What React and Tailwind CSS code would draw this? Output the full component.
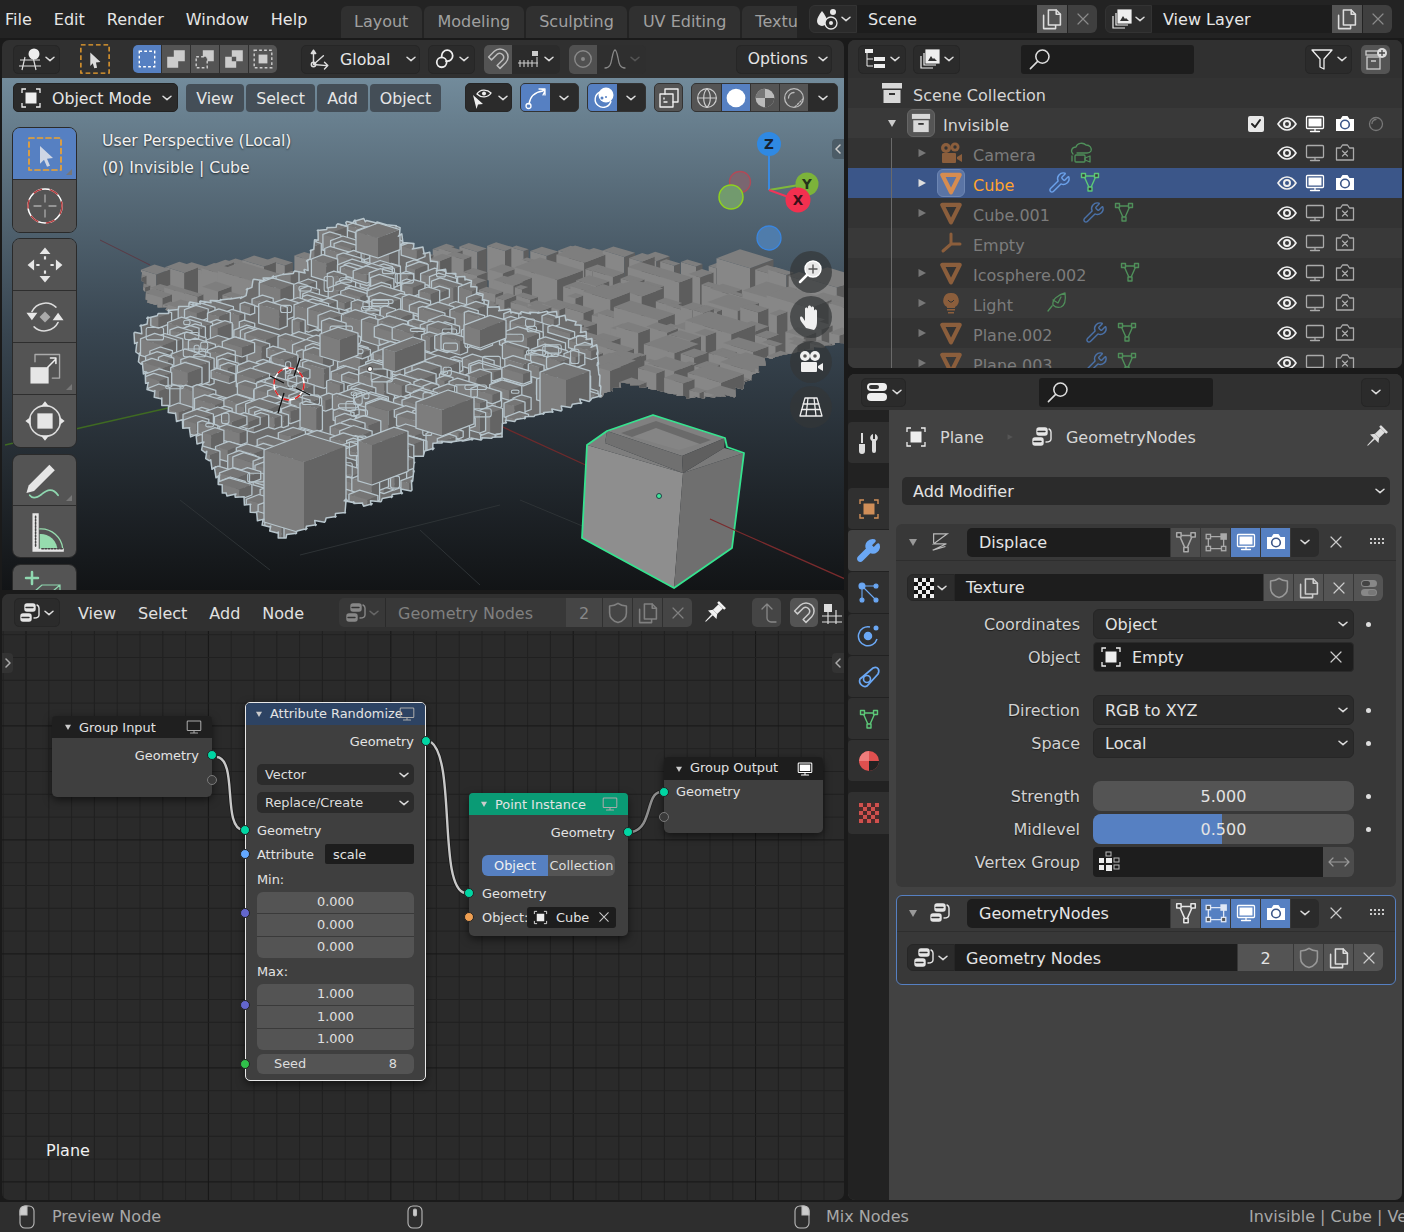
import React from 'react';
import { Wrench } from 'lucide-react';

const T = ({ children, cls = '' }) => <span className={`inline-block translate-y-px ${cls}`}>{children}</span>;
const Svg = ({ s = 20, h, vb = '0 0 20 20', sw = 1.3, className = '', children }) => (
  <svg width={s} height={h || s} viewBox={vb} fill="none" stroke="currentColor" strokeWidth={sw} strokeLinecap="round" strokeLinejoin="round" className={`shrink-0 ${className}`}>{children}</svg>
);
const Chev = ({ className = 'text-[#ddd]' }) => <Svg s={12} vb="0 0 12 12" sw={1.5} className={className}><path d="M2 4.2 6 7.6l4-3.4" /></Svg>;
const Close = ({ className = 'text-[#ccc]', s = 14 }) => <Svg s={s} vb="0 0 14 14" sw={1.2} className={className}><path d="M2 2l10 10M12 2 2 12" /></Svg>;
const Copy = ({ className = 'text-[#ddd]' }) => <Svg s={24} className={className}><path d="M3 7v11h10v-3M7 2.500h6.500l3.500 3.500v9H7z" /><path d="M13.500 2.500v3.500H17" /></Svg>;
const Shield = ({ className = 'text-[#999]' }) => <Svg s={24} className={className}><path d="M10 2c2 1.500 4 2.200 7 2.200V10c0 4-3 6.800-7 8-4-1.200-7-4-7-8V4.200C6 4.200 8 3.500 10 2z" /></Svg>;
const Search = () => <Svg s={24} className="text-[#ddd]"><circle cx="12" cy="8" r="5.500" /><path d="M8 12l-6 6" /></Svg>;
const Eye = ({ className = 'text-[#eee]' }) => <Svg s={20} className={className} sw={1.7}><path d="M1 10c3-4.600 6-6 9-6s6 1.400 9 6c-3 4.600-6 6-9 6s-6-1.400-9-6z" /><circle cx="10" cy="10" r="3" strokeWidth="2" /></Svg>;
const Monitor = ({ on, className = 'text-[#aaa]' }) => <Svg s={20} className={on ? 'text-white' : className}><rect x="1.500" y="2.500" width="17" height="12" rx="1" /><path d="M10 15v2.500M5.500 17.500h9" />{on && <rect x="3.500" y="4.500" width="13" height="8" fill="currentColor" stroke="none" />}</Svg>;
const CamOn = ({ className = 'text-white' }) => <svg width="20" height="20" viewBox="0 0 20 20" className={`shrink-0 ${className}`}><path d="M1 5h4.500l2-3h5l2 3H19v12H1z" fill="currentColor" /><circle cx="10" cy="10.500" r="4.300" fill="none" stroke="#3c5688" strokeWidth="1.600" /></svg>;
const CamOff = () => <Svg s={20} className="text-[#aaa]"><path d="M1.500 5h4l2-3h5l2 3h4v12h-17z" /><path d="M7.500 8l5 5M12.500 8l-5 5" /></Svg>;
const Box = ({ className = 'text-[#d8d8d8]', s = 22 }) => <svg width={s} height={s} viewBox="0 0 22 22" className={`shrink-0 ${className}`}><rect x="1" y="1" width="20" height="5.500" fill="currentColor" /><rect x="2.500" y="8" width="17" height="13" fill="currentColor" /><rect x="8" y="11" width="6" height="2" fill="#333" /></svg>;
const MeshObj = ({ className = 'text-[#8b5e3c]' }) => <Svg s={24} vb="0 0 22 22" sw={3.800} className={className}><path d="M3 3.500h16L11 19.500z" /></Svg>;
const MeshData = ({ className = 'text-[#4f8f5a]', s = 22 }) => <Svg s={s} vb="0 0 22 22" sw={1.400} className={className}><path d="M5 5h12L11.500 17.500 10.500 17.500z" /><rect x="2.500" y="2.500" width="4" height="4" fill="#383838" /><rect x="15.500" y="2.500" width="4" height="4" fill="#383838" /><rect x="9" y="16" width="4" height="4" fill="#383838" /></Svg>;
const GeoIcon = ({ className = 'text-[#e6e6e6]', s = 22 }) => <Svg s={s} vb="0 0 22 22" sw={1.400} className={className}><rect x="6" y="2" width="10" height="7" rx="2" fill="currentColor" /><rect x="2" y="12" width="10" height="7" rx="2" fill="currentColor" /><path d="M7 5.500h7M3 15.500h7" stroke="#333" /><path d="M18 3c2 1 2 2 2 3v7c0 2-2 3-5 3" /></Svg>;
const ObjIcon = ({ className = 'text-[#eee]', s = 22 }) => <svg width={s} height={s} viewBox="0 0 22 22" fill="none" className={`shrink-0 ${className}`}><path d="M2 6V2h4M16 2h4v4M20 16v4h-4M6 20H2v-4" stroke="currentColor" strokeWidth="1.300" /><rect x="5.500" y="5.500" width="11" height="11" fill="currentColor" /></svg>;
const Tri = ({ down, className = 'text-[#888]' }) => <svg width="10" height="10" viewBox="0 0 10 10" className={`shrink-0 ${className}`}>{down ? <path d="M1 2h8L5 9z" fill="currentColor" /> : <path d="M1.500 1l7.500 4-7.500 4z" fill="currentColor" />}</svg>;
const Checker = ({ red }) => {
  const cells = [];
  for (let y = 0; y < 5; y++) for (let x = 0; x < 5; x++) cells.push(<rect key={x + '-' + y} x={x * 4} y={y * 4} width="4" height="4" fill={(x + y) % 2 ? (red ? '#4a2a2a' : '#111') : (red ? '#d0504d' : '#eee')} />);
  return <svg width="20" height="20" viewBox="0 0 20 20" className="shrink-0">{cells}</svg>;
};
const Pin = ({ c = '#e8e8e8', s = 24 }) => (
  <svg width={s} height={s} viewBox="0 0 24 24" className="shrink-0">
    <g transform="rotate(45 12 12)" fill={c}>
      <rect x="7" y="0" width="10" height="2.500" rx=".6" />
      <rect x="9" y="2.500" width="6" height="8" />
      <path d="M9 10.500h6l3 4H6z" />
      <path d="M11.200 14h1.600l-.3 10h-1z" />
    </g>
  </svg>
);
const Magnet = ({ className = 'text-[#bbb]', s = 24 }) => <Svg s={s} vb="0 0 24 24" sw={1.500} className={className}><path d="M2.600 10 8.300 4.300A8 8 0 0 1 19.700 15.700L14 21.400 11.100 18.500 16.800 12.800A4 4 0 0 0 11.200 7.200L5.500 12.900z" /></Svg>;
const SnapGrid = ({ className = 'text-[#ccc]' }) => <svg width="24" height="22" viewBox="0 0 24 22" fill="none" stroke="currentColor" className={`shrink-0 ${className}`} strokeWidth="1.100"><path d="M1 15h20M3 12v7M7 12v7M11 12v7M15 12v7M20 9v10" /><rect x="15" y="3" width="6" height="5" fill="currentColor" stroke="none" /></svg>;
const Dashed = ({ x = 3, y = 3, w = 14, h = 14, c = '#ddd', da = '2.500 2', sw = 1.300 }) => <rect x={x} y={y} width={w} height={h} fill="none" stroke={c} strokeWidth={sw} strokeDasharray={da} />;
const Arrow = ({ x = 0, y = 0, c = '#ddd', k = 1 }) => <path transform={`translate(${x} ${y}) scale(${k})`} d="M0 0l9 8.500-4 .5 1 4.500-2.500.5-1.300-4.500L0 12z" fill={c} />;

const ModeBtn = ({ children, first, last, active }) => (
  <div className={`w-[28px] h-full flex items-center justify-center ${active ? 'bg-[#5680c2]' : 'bg-[#545454]'} ${first ? 'rounded-l-[5px]' : ''} ${last ? 'rounded-r-[5px]' : ''}`}>
    <svg width="22" height="22" viewBox="0 0 20 20">{children}</svg>
  </div>
);

const DarkBtn = ({ w, className = '', children }) => <div className={`h-[29px] ${w} rounded-[5px] bg-[#2b2b2b] border border-[#262626] flex items-center justify-center gap-[2px] shrink-0 ${className}`}>{children}</div>;
const MenuBtn = ({ w, ml, children }) => <div className={`h-[28px] ${w} ${ml} rounded-[4px] bg-[#444e57] flex items-center justify-center shrink-0 text-[#e6e6e6]`}><T>{children}</T></div>;

/* --------- 3D scene --------- */
const rng = (seed) => { let s = seed; return () => (s = (s * 16807) % 2147483647) / 2147483647; };
const inPoly = (x, y, p) => { let c = false; for (let i = 0, j = p.length - 1; i < p.length; j = i++) { if ((p[i][1] > y) !== (p[j][1] > y) && x < ((p[j][0] - p[i][0]) * (y - p[i][1])) / (p[j][1] - p[i][1]) + p[i][0]) c = !c; } return c; };
const TOP = [[134, 267], [207, 258], [258, 253], [405, 247], [442, 242], [534, 243], [580, 243], [695, 258], [755, 260], [845, 275]];
const CITY0 = [[134, 235], [845, 235], [845, 343], [773, 358], [736, 396], [695, 398], [630, 383], [603, 396], [400, 400], [148, 300]];
const HULL0 = [[355, 220], [396, 227], [403, 243], [424, 253], [437, 270], [465, 280], [488, 307], [511, 313], [548, 312], [575, 325], [598, 353], [600, 397], [562, 410], [506, 423], [502, 437], [442, 443], [414, 463], [412, 490], [371, 505], [345, 500], [345, 513], [286, 538], [263, 520], [244, 497], [226, 493], [203, 443], [148, 383], [134, 333], [148, 317], [189, 303], [242, 297], [253, 280], [304, 270], [318, 230]];
const stairs = (p, seed) => {
  const r = rng(seed), out = [];
  p.forEach((a, i) => {
    const b = p[(i + 1) % p.length];
    const n = Math.max(1, Math.round(Math.hypot(b[0] - a[0], b[1] - a[1]) / 10));
    for (let k = 0; k < n; k++) {
      const t0 = k / n, t1 = (k + 1) / n;
      const x0 = a[0] + (b[0] - a[0]) * t0, y0 = a[1] + (b[1] - a[1]) * t0, x1 = a[0] + (b[0] - a[0]) * t1, y1 = a[1] + (b[1] - a[1]) * t1;
      const j = (r() - 0.5) * 3;
      out.push([x0 + j, y0 - j], [x1 + j, y0 + j]);
      out.push([x1, y1]);
    }
  });
  return out;
};
const HULL = stairs(HULL0, 311);
const CITY = stairs(CITY0, 88);
const pts = (p) => p.map((q) => q[0].toFixed(1) + ',' + q[1].toFixed(1)).join(' ');
const bl = (fx, fy, a, b, h) => {
  const F = [fx, fy], L = [fx - a, fy - a * 0.3], R = [fx + b, fy - b * 0.38], B = [fx - a + b, fy - a * 0.3 - b * 0.38];
  const d = (q) => [q[0], q[1] + h];
  return { top: [L, B, R, F], left: [L, F, d(F), d(L)], right: [F, R, d(R), d(F)], sil: [L, B, R, d(R), d(F), d(L)], fy };
};
const topAt = (x) => { for (let i = 0; i < TOP.length - 1; i++) if (x <= TOP[i + 1][0]) { const t = (x - TOP[i][0]) / (TOP[i + 1][0] - TOP[i][0]); return TOP[i][1] + t * (TOP[i + 1][1] - TOP[i][1]); } return TOP[TOP.length - 1][1]; };
const genCity = () => {
  const r = rng(4242), out = [];
  for (let row = 0; row < 9; row++) {
    let x = 130 + r() * 18;
    while (x < 880) {
      const big = r() < 0.14;
      const a = big ? 26 + r() * 26 : 7 + r() * 15, b = big ? 10 + r() * 16 : 5 + r() * 9, h = big ? 60 + r() * 40 : 34 + r() * 46;
      const fx = x + a * 0.5;
      const jig = row === 0 ? r() * 6 : (r() - 0.3) * 24;
      out.push(bl(fx, topAt(Math.min(fx, 845)) + 8 + row * 15 + jig, a, b, h));
      x += a * 0.5 + 4 + r() * 15;
    }
  }
  return out.sort((p, q) => p.fy - q.fy);
};
const genBlocks = (poly, n, seed, box, sa, sb, sh) => {
  const r = rng(seed), out = [];
  while (out.length < n) {
    const x = box[0] + r() * (box[2] - box[0]), y = box[1] + r() * (box[3] - box[1]);
    if (inPoly(x, y, poly)) out.push(bl(x, y, sa[0] + r() * sa[1], sb[0] + r() * sb[1], sh[0] + r() * sh[1]));
  }
  return out.sort((p, q) => p.fy - q.fy);
};
const cityBlocks = genCity();
const fortBlocks = genBlocks(HULL0, 400, 977, [134, 220, 600, 538], [7, 16], [4, 11], [5, 20]);
const bigBlocks = [bl(304, 462, 40, 42, 72), bl(372, 445, 14, 36, 40), bl(378, 238, 22, 22, 20), bl(566, 380, 26, 24, 55), bl(442, 410, 26, 32, 26), bl(340, 340, 20, 18, 22), bl(395, 352, 12, 30, 20), bl(480, 330, 16, 26, 18)];
const detail = (() => { const r = rng(555), o = []; while (o.length < 80) { const x = 134 + r() * 466, y = 220 + r() * 318; if (inPoly(x, y, HULL0)) o.push({ x, y, w: 5 + r() * 18, h: 3 + r() * 12 }); } return o; })();

const Blocks = ({ list, outline }) => list.map((b, i) => (
  <g key={i}>
    <polygon points={pts(b.left)} fill={outline ? '#7d7d7d' : '#878787'} />
    <polygon points={pts(b.right)} fill={outline ? '#646464' : '#5d5d5d'} />
    <polygon points={pts(b.top)} fill={outline ? '#757575' : '#7e7e7e'} />
    {outline && <polygon points={pts(b.sil)} fill="none" stroke="#b7c5cc" strokeWidth="1.300" strokeLinejoin="round" />}
  </g>
));

const Scene = () => (
  <svg width="842" height="512" viewBox="2 78 842 512" className="absolute left-0 top-0">
    <defs>
      <clipPath id="cityClip"><polygon points={pts(CITY)} /></clipPath>
      <clipPath id="hullClip"><polygon points={pts(HULL)} /></clipPath>
    </defs>
    <path d="M100 240l50 25" stroke="#5b3a44" strokeWidth="1" />
    <path d="M5 445 190 403" stroke="#3f6a22" strokeWidth="1.300" />
    <path d="M470 412 590 467" stroke="#6e2a2c" strokeWidth="1.300" />
    <path d="M300 555l200-50M520 500l120 50M420 530l60 55M180 500l90 70" stroke="#2e3336" strokeWidth="1" />
    <g clipPath="url(#cityClip)"><Blocks list={cityBlocks} /></g>
    <polygon points={pts(HULL)} fill="#6c6c6c" />
    <g clipPath="url(#hullClip)">
      <Blocks list={fortBlocks} outline />
      {detail.map((d, i) => <rect key={i} x={d.x} y={d.y} width={d.w} height={d.h} rx="2" fill="none" stroke="#b7c5cc" strokeWidth="1.100" />)}
      <Blocks list={bigBlocks} outline />
    </g>
    <polygon points={pts(HULL)} fill="none" stroke="#b7c5cc" strokeWidth="1.500" strokeLinejoin="round" />
    {/* selected cube */}
    <polygon points="587,445 683,473 674,588 582,538" fill="#8e8e8e" />
    <polygon points="683,473 744,453 732,548 674,588" fill="#6f6f6f" />
    <polygon points="587,445 607,431 605,443 683,473" fill="#7e7e7e" />
    <polygon points="683,473 724,448 744,453" fill="#7a7a7a" />
    <polygon points="607,431 653,415 725,438 682,456" fill="#808080" />
    <polygon points="607,431 682,456 683,473 605,443" fill="#707070" />
    <polygon points="682,456 725,438 724,448 683,473" fill="#5f5f5f" />
    <polygon points="621,433 656,421 711,440 679,450" fill="#858585" />
    <polygon points="621,433 656,421 711,440 700,444 656,428 632,437" fill="#6a6a6a" />
    <polygon points="587,445 607,431 653,415 725,438 727,447 744,453 732,548 674,588 582,538" fill="none" stroke="#36e38f" strokeWidth="1.800" strokeLinejoin="round" />
    <path d="M710 519l22 10M732 529l113 50" stroke="#7a2b2d" strokeWidth="1.300" />
    <circle cx="659" cy="496" r="2.500" fill="#3ee89a" stroke="#123" strokeWidth=".8" />
    <circle cx="370" cy="369" r="2.500" fill="#fff" stroke="#222" strokeWidth=".8" />
    {/* 3d cursor */}
    <ellipse cx="289" cy="384" rx="15" ry="16" fill="none" stroke="#fff" strokeWidth="1.500" />
    <ellipse cx="289" cy="384" rx="15" ry="16" fill="none" stroke="#e02020" strokeWidth="1.500" strokeDasharray="6 6" />
    <path d="M300 358l-6 18M284 393l-6 20M270 376l14 7M296 388l14 7" stroke="#111" strokeWidth="1.300" />
    {/* gizmo */}
    <circle cx="769" cy="238" r="12" fill="#4f7cab" stroke="#3a86df" strokeWidth="1.300" />
    <circle cx="740" cy="182" r="10.500" fill="#7a6670" stroke="#b04a58" strokeWidth="1.300" />
    <circle cx="731" cy="197" r="12" fill="#729a6e" stroke="#8fd21f" strokeWidth="1.500" />
    <path d="M769 190V150" stroke="#3a8ae0" strokeWidth="2" />
    <path d="M769 190l30-5" stroke="#7fb93a" strokeWidth="2" />
    <path d="M769 190l22 8" stroke="#f0355a" strokeWidth="2" />
    <circle cx="769" cy="144" r="12" fill="#2f89e3" />
    <circle cx="807" cy="184" r="11.500" fill="#7cb33a" />
    <circle cx="798" cy="200" r="12.500" fill="#f2304f" />
    <g fontFamily="'DejaVu Sans',sans-serif" fontWeight="700" fontSize="13.500" textAnchor="middle" fill="#162232">
      <text x="769" y="149">Z</text>
      <text x="807" y="189" fill="#25331a">Y</text>
      <text x="798" y="205" fill="#3a0f18">X</text>
    </g>
  </svg>
);

/* --------- toolbar --------- */
const Tool = ({ active, last, first, corner, k = 44, h = 'h-[52px]', children }) => (
  <div className={`relative ${h} w-full flex items-center justify-center ${active ? 'bg-[#5680c2]' : 'bg-[#545454]'} ${first ? 'rounded-t-[7px]' : ''} ${last ? 'rounded-b-[7px]' : 'border-b border-[#2e2e2e]'}`}>
    <svg width={k} height={k} viewBox="0 0 44 44" fill="none" strokeLinecap="round" strokeLinejoin="round">{children}</svg>
    {corner && <span className="absolute right-[4px] bottom-[4px] w-0 h-0 border-l-[6px] border-l-transparent border-b-[6px] border-b-[#777]" />}
  </div>
);
const Toolbar = () => (
  <div className="absolute left-[11px] top-[50px] flex flex-col w-[63px]">
    <div className="rounded-[7px] outline outline-[#2a2a2a]">
      <Tool first active corner>
        <rect x="6" y="6" width="32" height="32" stroke="#f0a22e" strokeWidth="1.700" strokeDasharray="5 3.500" />
        <path d="M17 14l13 12-6 .8 3 7-3 1-3-7-4 4z" fill="#cfd6e4" />
      </Tool>
      <Tool last>
        <circle cx="22" cy="22" r="17" stroke="#fff" strokeWidth="1.500" />
        <circle cx="22" cy="22" r="17" stroke="#b33a3c" strokeWidth="1.500" strokeDasharray="8 9" />
        <path d="M22 11v7M22 26v7M11 22h7M26 22h7" stroke="#aaa" strokeWidth="1.300" />
      </Tool>
    </div>
    <div className="rounded-[7px] outline outline-[#2a2a2a] mt-[7px]">
      <Tool first k={48}>
        <g fill="#e6e6e6"><path d="M22 6l-5 6h10zM22 38l-5-6h10zM6 22l6-5v10zM38 22l-6-5v10z" /><path d="M21 14h2v3h-2zM21 27h2v3h-2zM14 21h3v2h-3zM27 21h3v2h-3z" /></g>
      </Tool>
      <Tool k={48}>
        <path d="M10 17a14 14 0 0 1 22-4M34 27a14 14 0 0 1-22 4" stroke="#ddd" strokeWidth="1.400" />
        <path d="M5 18h10l-5 7zM29 25h10l-5-7z" fill="#e6e6e6" />
        <path d="M22 17l5 5-5 5-5-5z" fill="#aaa" />
      </Tool>
      <Tool corner k={40}>
        <path d="M11 14V6h27v26h-8" stroke="#aaa" strokeWidth="1.500" />
        <rect x="6" y="20" width="20" height="18" fill="#e6e6e6" />
        <path d="M25 20l9-9M28 10h6v6" stroke="#eee" strokeWidth="1.700" />
      </Tool>
      <Tool last k={48}>
        <rect x="15" y="15" width="14" height="14" fill="#e6e6e6" />
        <path d="M12 12a14 14 0 0 1 20 0M32 32a14 14 0 0 1-20 0M12 32a14 14 0 0 1 0-20M32 12a14 14 0 0 1 0 20" stroke="#ddd" strokeWidth="1.300" strokeDasharray="9 4" />
        <path d="M22 4l-4 5h8zM22 40l-4-5h8zM4 22l5-4v8zM40 22l-5-4v8z" fill="#e6e6e6" />
      </Tool>
    </div>
    <div className="rounded-[7px] outline outline-[#2a2a2a] mt-[8px]">
      <Tool first corner k={48} h="h-[51px]">
        <path d="M7 27l19-19 5 5-19 19-7 2z" fill="#e6e6e6" />
        <path d="M8 36c3 4 7 2 11-1 5-4 10-6 15 1" stroke="#8fd8b0" strokeWidth="1.600" />
      </Tool>
      <Tool last k={46} h="h-[51px]">
        <path d="M17 24a16 16 0 0 1 17 16H17z" fill="#96dcae" />
        <path d="M17 19a21 21 0 0 1 22 19" stroke="#96dcae" strokeWidth="1.300" />
        <path d="M10 4h6v34h24v3H10z" fill="#e6e6e6" />
        <path d="M13 7v30M19 38h20" stroke="#444" strokeWidth="1.500" strokeDasharray="1.500 1.500" />
      </Tool>
    </div>
    <div className="rounded-[7px] outline outline-[#2a2a2a] mt-[8px]">
      <Tool first>
        <path d="M9 3v12M3 9h12" stroke="#8fd8b0" strokeWidth="2.500" />
        <path d="M12 22l7-6h18v14H12zM12 22h18v8M30 22l7-6" stroke="#8fd8b0" strokeWidth="1.200" />
      </Tool>
    </div>
  </div>
);

const Nav = ({ children }) => <div className="w-[42px] h-[42px] rounded-full bg-[#333638]/70 flex items-center justify-center">{children}</div>;
const NavGizmos = () => (
  <div className="absolute left-[788px] top-[173px] flex flex-col gap-[3px]">
    <Nav><Svg s={26} vb="0 0 26 26" sw={1.400} className="text-white"><circle cx="15" cy="10" r="8" fill="#e8e8e8" /><path d="M15 6v8M11 10h8" stroke="#555" /><path d="M9 16l-7 7" strokeWidth="2.500" /></Svg></Nav>
    <Nav><svg width="24" height="26" viewBox="0 0 24 26"><path d="M7 24c-2-3-6-7-6-10 0-2 2-2 3 0l2 3V5c0-2 3-2 3 0v6-8c0-2 3-2 3 0v8-7c0-2 3-2 3 0v8-5c0-2 3-2 3 0v10c0 5-1 7-3 9z" fill="#f0f0f0" /></svg></Nav>
    <Nav><svg width="26" height="24" viewBox="0 0 26 24" fill="#f0f0f0"><circle cx="7" cy="6" r="5" /><circle cx="17" cy="6" r="5" /><circle cx="7" cy="6" r="1.800" fill="#555" /><circle cx="17" cy="6" r="1.800" fill="#555" /><rect x="3" y="12" width="16" height="10" rx="1" /><path d="M20 16l5-3v8l-5-3z" /></svg></Nav>
    <Nav><Svg s={26} vb="0 0 26 26" sw={1.300} className="text-[#eee]"><path d="M7 4h12l5 18H2zM10 4 8 22M16 4l2 18M5 10h16M3.500 15.500h19" /></Svg></Nav>
  </div>
);

/* --------- viewport --------- */
const TopHeader = () => (
  <div className="h-[38px] bg-[#303030] flex items-center shrink-0 text-[#e6e6e6]">
    <DarkBtn w="w-[47px]" className="ml-[11px]">
      <svg width="24" height="24" viewBox="0 0 24 24" fill="none" stroke="#ddd" strokeWidth="1.200"><path d="M2 13h20M1 19h22M7 10l-3 13M15 10l3 13" /><circle cx="16" cy="7" r="5.500" fill="#eee" stroke="none" /></svg>
      <Chev />
    </DarkBtn>
    <div className="ml-[19px] w-[32px] h-[32px] flex items-center justify-center">
      <svg width="34" height="34" viewBox="0 0 34 34"><Dashed x={2} y={2} w={30} h={30} c="#f0a22e" da="5 3" sw={1.500} /><Arrow x={12} y={10} c="#ddd" k={1.200} /></svg>
    </div>
    <div className="ml-[22px] w-[144px] h-[28px] flex gap-[1px]">
      <ModeBtn first active><Dashed c="#fff" /></ModeBtn>
      <ModeBtn><path d="M2 18V8h6V2h10v10h-6v6z" fill="#ccc" /></ModeBtn>
      <ModeBtn><Dashed x={2} y={8} w={10} h={10} c="#ccc" /><path d="M8 2h10v10h-6V8H8z" fill="#ccc" /></ModeBtn>
      <ModeBtn><path d="M2 18V8h6V2h10v10h-6v6zM8 8v4h4V8z" fill="#ccc" fillRule="evenodd" /></ModeBtn>
      <ModeBtn last><Dashed x={2} y={2} w={16} h={16} c="#ccc" /><rect x="6" y="6" width="8" height="8" fill="#ccc" /></ModeBtn>
    </div>
    <DarkBtn w="w-[119px]" className="ml-[24px] justify-start pl-[6px]">
      <Svg s={22} className="text-[#ddd]"><path d="M5 2l-2 3h4zM5 3v12l12 1M15 13l3 3-3 3M5 15l9-8" /><circle cx="5" cy="15" r="2" /></Svg>
      <T cls="ml-[8px] text-[15.800px]">Global</T><span className="ml-auto mr-[2px]"><Chev /></span>
    </DarkBtn>
    <DarkBtn w="w-[47px]" className="ml-[8px]">
      <Svg s={22} className="text-[#eee]" sw={1.600}><circle cx="7" cy="13" r="4.500" /><path d="M7 8.500V7a5 5 0 0 1 10 0v0a5 5 0 0 1-5 5h-1" /></Svg><Chev />
    </DarkBtn>
    <div className="ml-[9px] w-[76px] h-[29px] rounded-[5px] bg-[#2b2b2b] flex items-center overflow-hidden">
      <div className="w-[28px] h-full bg-[#545454] flex items-center justify-center"><Magnet /></div>
      <div className="flex-1 flex items-center justify-center gap-[2px]"><SnapGrid /><Chev /></div>
    </div>
    <div className="ml-[9px] w-[77px] h-[29px] rounded-[5px] bg-[#2f2f2f] flex items-center overflow-hidden">
      <div className="w-[28px] h-full bg-[#505050] flex items-center justify-center"><Svg s={22} className="text-[#888]"><circle cx="10" cy="10" r="7.500" /><circle cx="10" cy="10" r="1.800" fill="currentColor" stroke="none" /></Svg></div>
      <div className="flex-1 flex items-center justify-center text-[#888] gap-[2px]"><Svg s={24} vb="0 0 24 24"><path d="M2 21c5 0 6-4 7-10 1-5 2-8 3-8s2 3 3 8c1 6 2 10 7 10" /></Svg><Chev className="text-[#555]" /></div>
    </div>
    <DarkBtn w="w-[96px]" className="ml-[90px] justify-end pr-[2px]"><T cls="text-[15.600px] mr-[7px]">Options</T><Chev /></DarkBtn>
  </div>
);

const ViewportHeader = () => (
  <div className="absolute left-[11px] top-[5px] flex items-center h-[29px] text-[#e6e6e6] text-[15.800px]">
    <div className="w-[165px] h-[29px] rounded-[5px] bg-[#2b2b2b] border border-[#222] flex items-center pl-[6px] shrink-0">
      <ObjIcon /><T cls="ml-[10px]">Object Mode</T><span className="ml-auto mr-[4px]"><Chev /></span>
    </div>
    <MenuBtn w="w-[58px]" ml="ml-[8px]">View</MenuBtn>
    <MenuBtn w="w-[69px]" ml="ml-[2px]">Select</MenuBtn>
    <MenuBtn w="w-[51px]" ml="ml-[2px]">Add</MenuBtn>
    <MenuBtn w="w-[71px]" ml="ml-[2px]">Object</MenuBtn>
    <DarkBtn w="w-[47px]" className="ml-[24px]">
      <svg width="26" height="22" viewBox="0 0 26 22" fill="none"><path d="M8 7c3-5 10-5 14-1-3 5-10 5-14 1z" stroke="#eee" strokeWidth="1.400" /><circle cx="15" cy="6.500" r="2" fill="#eee" /><path d="M4 8l10 9-5 .5-1.500 4.500z" fill="#eee" /></svg>
      <Chev />
    </DarkBtn>
    <div className="ml-[8px] w-[59px] h-[29px] rounded-[5px] bg-[#2b2b2b] border border-[#333] flex overflow-hidden">
      <div className="w-[29px] bg-[#5680c2] flex items-center justify-center"><Svg s={24} vb="0 0 24 24" className="text-white"><path d="M5 18C6 11 11 6 19 5M15 3h6v6M17 3l4 2-2 4" /><circle cx="4.500" cy="20" r="2.500" /></Svg></div>
      <div className="flex-1 flex items-center justify-center"><Chev /></div>
    </div>
    <div className="ml-[8px] w-[59px] h-[29px] rounded-[5px] bg-[#2b2b2b] border border-[#333] flex overflow-hidden">
      <div className="w-[29px] bg-[#5680c2] flex items-center justify-center"><svg width="24" height="24" viewBox="0 0 24 24" fill="none"><path d="M9 6a8 8 0 1 0 11 9" stroke="#fff" strokeWidth="1.400" /><circle cx="15" cy="9" r="7.500" fill="#fff" /><circle cx="11" cy="12" r="1.500" fill="#5680c2" /><circle cx="15" cy="11" r="1" fill="#5680c2" /></svg></div>
      <div className="flex-1 flex items-center justify-center"><Chev /></div>
    </div>
    <div className="ml-[8px] w-[29px] h-[29px] rounded-[5px] bg-[#545454] border border-[#333] flex items-center justify-center shrink-0"><Svg s={24} vb="0 0 24 24" className="text-[#eee]" sw={1.400}><rect x="3" y="8" width="13" height="13" /><path d="M8 8V3h13v13h-5" /><path d="M7 12v1M7 16h3" /></Svg></div>
    <div className="ml-[8px] w-[147px] h-[29px] rounded-[5px] bg-[#2b2b2b] border border-[#333] flex overflow-hidden shrink-0">
      <div className="w-[29px] bg-[#545454] flex items-center justify-center"><Svg s={22} className="text-[#ccc]" sw={1.100}><circle cx="10" cy="10" r="8.500" /><path d="M1.500 10h17M10 1.500c-4 4-4 13 0 17M10 1.500c4 4 4 13 0 17" /></Svg></div>
      <div className="w-[29px] bg-[#5680c2] flex items-center justify-center border-l border-[#333]"><svg width="22" height="22" viewBox="0 0 20 20"><circle cx="10" cy="10" r="8.500" fill="#fff" /></svg></div>
      <div className="w-[29px] bg-[#545454] flex items-center justify-center border-l border-[#333]"><svg width="22" height="22" viewBox="0 0 20 20"><circle cx="10" cy="10" r="8.500" fill="#bbb" /><path d="M10 10h8.500A8.500 8.500 0 0 1 10 18.500z" fill="#555" /><path d="M10 1.500A8.500 8.500 0 0 0 1.500 10H10z" fill="#777" /></svg></div>
      <div className="w-[29px] bg-[#545454] flex items-center justify-center border-l border-[#333]"><Svg s={22} className="text-[#bbb]" sw={1.200}><circle cx="10" cy="10" r="8.500" /><path d="M5 10a5 5 0 0 1 5-5" /><path d="M11 18l7-7" strokeDasharray="1.500 1.500" /></Svg></div>
      <div className="flex-1 flex items-center justify-center"><Chev /></div>
    </div>
  </div>
);

const Viewport = () => (
  <div className="h-[550px] rounded-t-[7px] overflow-hidden flex flex-col shrink-0">
    <TopHeader />
    <div className="relative flex-1 overflow-hidden bg-linear-to-b from-[#728b9b] via-[#384550] via-50% to-[#121416]">
      <Scene />
      <ViewportHeader />
      <Toolbar />
      <NavGizmos />
      <div className="absolute left-[100px] top-[53px] flex flex-col gap-[7px] text-[#f0f0f0] text-[15.700px] leading-[20px] [text-shadow:0_1px_2px_rgba(0,0,0,.7)]">
        <span>User Perspective (Local)</span>
        <span>(0) Invisible | Cube</span>
      </div>
      <div className="absolute right-0 top-[61px] w-[12px] h-[20px] rounded-l-[4px] bg-[#4c5c67] flex items-center justify-center text-[#ccc]"><Svg s={10} vb="0 0 10 10" sw={1.500}><path d="M7 1 3 5l4 4" /></Svg></div>
    </div>
  </div>
);

/* --------- node editor --------- */
const Socket = ({ c, side = 'l' }) => (
  <span className={`absolute top-1/2 -translate-y-1/2 w-[10px] h-[10px] rounded-full ${side === 'l' ? 'left-[-6px]' : 'right-[-6px]'} border border-[#222] ${c || ''}`} />
);
const NRow = ({ children, right, h = 'h-[24px]', mt = '' }) => <div className={`relative ${h} ${mt} flex items-center px-[11px] ${right ? 'justify-end' : ''}`}>{children}</div>;
const NodeShell = ({ pos, w, sel, children }) => (
  <div className={`absolute ${pos} ${w} rounded-[5px] bg-[#3f3f3f] text-[#e3e3e3] text-[12.900px] leading-none shadow-[0_3px_8px_rgba(0,0,0,.55)] ${sel ? 'border border-[#e8e8e8]' : ''}`}>{children}</div>
);
const NHead = ({ bg, title, mon, pl = 'pl-[11px]', h = 'h-[22px]', shift }) => (
  <div className={`${h} ${bg} rounded-t-[4px] flex items-center ${pl} relative overflow-hidden`}>
    <Tri down className="text-[#ccc] scale-75" />
    <span className={`ml-[6px] whitespace-nowrap ${shift ? 'translate-y-px' : ''}`}>{title}</span>
    <span className="absolute right-[8px] top-1/2 -translate-y-1/2 scale-[.8] bg-transparent"><Monitor on={mon} className="text-[#aaa]" /></span>
  </div>
);
const NSel = ({ children, mt }) => <div className={`mx-[11px] ${mt} h-[21px] rounded-[5px] bg-[#2b2b2b] flex items-center pl-[8px] pr-[4px] justify-between text-[#ddd]`}><T>{children}</T><Chev /></div>;
const NVec = ({ vals }) => (
  <div className="mx-[11px] mt-[1px] h-[66px] rounded-[6px] bg-[#545454] flex flex-col overflow-hidden text-[#e0e0e0]">
    {vals.map((v, i) => <div key={i} className={`flex-1 flex items-center justify-center ${i < 2 ? 'border-b border-[#3a3a3a]' : ''}`}>{v}</div>)}
  </div>
);

const Grid = () => {
  const v = [], h = [];
  for (let i = 0; i < 38; i++) { const x = 3.2 + i * 22.8; v.push(<path key={i} d={`M${x} 631V1200`} stroke={i % 8 === 1 ? '#171717' : '#202020'} strokeWidth="1" />); }
  for (let i = 0; i < 26; i++) { const y = 634.7 + i * 22.8; h.push(<path key={i} d={`M2 ${y}H844`} stroke={(i - 4) % 5 === 0 ? '#171717' : '#202020'} strokeWidth="1" />); }
  return <>{v}{h}</>;
};

const Wire = ({ d, c = '#c8c8c8' }) => <><path d={d} stroke="#1a1a1a" strokeWidth="4" fill="none" /><path d={d} stroke={c} strokeWidth="2.400" fill="none" /></>;

const NodeEditor = () => (
  <div className="h-[606px] rounded-[7px] overflow-hidden flex flex-col shrink-0 bg-[#2a2a2a]">
    <div className="h-[37px] bg-[#303030] flex items-center shrink-0 text-[#e0e0e0] overflow-hidden">
      <DarkBtn w="w-[46px]" className="ml-[12px]"><GeoIcon /><Chev /></DarkBtn>
      <T cls="ml-[18px]">View</T>
      <T cls="ml-[22px]">Select</T>
      <T cls="ml-[22px]">Add</T>
      <T cls="ml-[22px]">Node</T>
      <div className="ml-[35px] w-[46px] h-[29px] rounded-l-[5px] bg-[#383838] flex items-center justify-center shrink-0 gap-[1px]"><GeoIcon className="text-[#888]" /><Chev className="text-[#666]" /></div>
      <div className="w-[181px] h-[29px] bg-[#383838] border-l border-[#2a2a2a] flex items-center pl-[12px] text-[#808080] shrink-0"><T>Geometry Nodes</T></div>
      <div className="w-[36px] h-[29px] bg-[#454545] flex items-center justify-center text-[#888] shrink-0"><T>2</T></div>
      <div className="ml-[1px] w-[29px] h-[29px] bg-[#454545] flex items-center justify-center shrink-0"><Shield className="text-[#808080]" /></div>
      <div className="ml-[1px] w-[29px] h-[29px] bg-[#454545] flex items-center justify-center shrink-0"><Copy className="text-[#808080]" /></div>
      <div className="ml-[1px] w-[29px] h-[29px] bg-[#454545] rounded-r-[5px] flex items-center justify-center shrink-0"><Close className="text-[#808080]" /></div>
      <div className="ml-[8px] w-[28px] flex justify-center shrink-0"><Pin c="#f2f2f2" /></div>
      <div className="ml-[24px] w-[29px] h-[29px] rounded-[5px] bg-[#454545] flex items-center justify-center shrink-0"><Svg s={24} vb="0 0 24 24" className="text-[#888]"><path d="M7 8l5-5 5 5M12 3v14c0 2 2 4 4 4h5" /></Svg></div>
      <div className="ml-[9px] w-[28px] h-[29px] rounded-[5px] bg-[#545454] flex items-center justify-center shrink-0"><Magnet className="text-[#ccc]" /></div>
      <div className="w-[28px] flex items-center justify-center shrink-0 text-[#ddd]"><svg width="22" height="22" viewBox="0 0 22 22" fill="none" stroke="currentColor" strokeWidth="1.200"><path d="M1 14h20M1 20h20M7 8v14M15 8v14" /><rect x="3" y="2" width="8" height="8" fill="currentColor" stroke="none" /></svg></div>
    </div>
    <div className="relative flex-1 overflow-hidden">
      <svg width="842" height="569" viewBox="2 631 842 569" className="absolute left-0 top-0">
        <Grid />
        <Wire d="M217 757C238 760 222 828 243 830" />
        <Wire d="M431 742C456 760 438 888 465 893" />
        <path d="M632 832C652 828 646 794 660 792" stroke="#1a1a1a" strokeWidth="4" fill="none" />
        <path d="M632 832C652 828 646 794 660 792" stroke="#8d8d8d" strokeWidth="2.600" fill="none" />
      </svg>
      <div className="absolute left-0 top-[22px] w-[11px] h-[20px] rounded-r-[4px] bg-[#333] flex items-center justify-center text-[#aaa]"><Svg s={10} vb="0 0 10 10" sw={1.500}><path d="M3 1l4 4-4 4" /></Svg></div>
      <div className="absolute right-0 top-[22px] w-[12px] h-[20px] rounded-l-[4px] bg-[#333] flex items-center justify-center text-[#aaa]"><Svg s={10} vb="0 0 10 10" sw={1.500}><path d="M7 1 3 5l4 4" /></Svg></div>

      <NodeShell pos="left-[50px] top-[85px]" w="w-[160px] h-[81px]">
        <NHead bg="bg-[#1f1f1f]" title="Group Input" shift />
        <NRow right mt="mt-[5px]" h="h-[24px]">
          <T cls="mr-[2px]">Geometry</T><span className="absolute right-[-5px] top-1/2 -translate-y-1/2 w-[10px] h-[10px] rounded-full bg-[#00d6a3] border border-[#222]" />
        </NRow>
        <div className="relative h-[26px]"><span className="absolute right-[-5px] top-1/2 -translate-y-1/2 w-[10px] h-[10px] rounded-full border border-[#7a7a7a] bg-[#3a3a3a]" /></div>
      </NodeShell>

      <NodeShell pos="left-[243px] top-[71px]" w="w-[181px] h-[379px]" sel>
        <NHead bg="bg-[#2d4363]" title="Attribute Randomize" pl="pl-[8px]" />
        <NRow right mt="mt-[4px]"><T>Geometry</T><Socket side="r" c="bg-[#00d6a3]" /></NRow>
        <NSel mt="mt-[11px]">Vector</NSel>
        <NSel mt="mt-[7px]">Replace/Create</NSel>
        <NRow mt="mt-[5px]"><T>Geometry</T><Socket c="bg-[#00d6a3]" /></NRow>
        <NRow><T>Attribute</T><Socket c="bg-[#63a8ff]" /><span className="absolute left-[79px] right-[11px] h-[20px] bg-[#1d1d1d] rounded-[2px] flex items-center pl-[8px]"><T>scale</T></span></NRow>
        <NRow mt="mt-[1px]"><T>Min:</T></NRow>
        <div className="relative"><NVec vals={['0.000', '0.000', '0.000']} /><span className="absolute left-[-6px] top-[16px] w-[10px] h-[10px] rounded-full bg-[#6366cc] border border-[#222]" /></div>
        <NRow mt="mt-[1px]"><T>Max:</T></NRow>
        <div className="relative"><NVec vals={['1.000', '1.000', '1.000']} /><span className="absolute left-[-6px] top-[16px] w-[10px] h-[10px] rounded-full bg-[#6366cc] border border-[#222]" /></div>
        <div className="relative mt-[4px] h-[20px]">
          <div className="mx-[11px] h-[20px] rounded-[6px] bg-[#545454] flex items-center justify-between px-[17px] text-[#ddd]"><span>Seed</span><span>8</span></div>
          <Socket c="bg-[#30c04a]" />
        </div>
      </NodeShell>

      <NodeShell pos="left-[467px] top-[162px]" w="w-[159px] h-[143px]">
        <NHead bg="bg-[#0a9b75]" title="Point Instance" pl="pl-[10px]" shift />
        <NRow right mt="mt-[5px]" h="h-[24px]"><T cls="mr-[2px]">Geometry</T><span className="absolute right-[-5px] top-1/2 -translate-y-1/2 w-[10px] h-[10px] rounded-full bg-[#00d6a3] border border-[#222]" /></NRow>
        <div className="mx-[13px] mt-[11px] h-[21px] flex rounded-[6px] overflow-hidden">
          <div className="w-[66px] bg-[#5680c2] flex items-center justify-center text-[#f0f0f0]"><T>Object</T></div>
          <div className="flex-1 bg-[#545454] flex items-center justify-center text-[#ddd] whitespace-nowrap"><T>Collection</T></div>
        </div>
        <div className="relative h-[24px] mt-[5px] flex items-center pl-[13px]"><T>Geometry</T><span className="absolute left-[-5px] top-1/2 -translate-y-1/2 w-[10px] h-[10px] rounded-full bg-[#00d6a3] border border-[#222]" /></div>
        <div className="relative h-[24px] flex items-center pl-[13px]">
          <T>Object:</T><span className="absolute left-[-5px] top-1/2 -translate-y-1/2 w-[10px] h-[10px] rounded-full bg-[#ef9f52] border border-[#222]" />
          <div className="absolute left-[58px] w-[89px] h-[21px] rounded-[3px] bg-[#1d1d1d] flex items-center pl-[6px]"><ObjIcon s={15} /><T cls="ml-[8px]">Cube</T><span className="ml-auto mr-[6px]"><Close s={12} /></span></div>
        </div>
      </NodeShell>

      <NodeShell pos="left-[662px] top-[126px]" w="w-[159px] h-[76px]">
        <NHead bg="bg-[#1d1d1d]" title="Group Output" mon h="h-[23px]" pl="pl-[10px]" />
        <div className="relative h-[24px] flex items-center pl-[12px]"><span>Geometry</span><span className="absolute left-[-5px] top-1/2 -translate-y-1/2 w-[10px] h-[10px] rounded-full bg-[#00d6a3] border border-[#222]" /></div>
        <div className="relative h-[26px]"><span className="absolute left-[-5px] top-1/2 -translate-y-1/2 w-[10px] h-[10px] rounded-full border border-[#7a7a7a] bg-[#3a3a3a]" /></div>
      </NodeShell>

      <span className="absolute left-[44px] top-[510px] text-[#f0f0f0] leading-[20px]">Plane</span>
    </div>
  </div>
);

/* --------- outliner --------- */
const CamObj = () => <svg width="24" height="22" viewBox="0 0 24 22" fill="#8b5e3c" className="shrink-0"><circle cx="7" cy="6" r="5" /><circle cx="16" cy="5" r="4.500" /><circle cx="7" cy="6" r="1.700" fill="#333" /><circle cx="16" cy="5" r="1.700" fill="#333" /><rect x="3" y="11" width="14" height="10" rx="1" /><path d="M18 15l5-3v8l-5-3z" /></svg>;
const EmptyObj = () => <Svg s={22} vb="0 0 22 22" sw={3} className="text-[#8b5e3c]"><path d="M11 2v10M11 12h9M11 12l-8 7" /></Svg>;
const Bulb = () => <svg width="20" height="22" viewBox="0 0 20 22" fill="#8b5e3c" className="shrink-0"><path d="M10 1a7.500 7.500 0 0 1 4 14v1H6v-1A7.500 7.500 0 0 1 10 1z" /><path d="M7 8l2 2h2l2-2" stroke="#333" fill="none" /><rect x="6" y="17" width="8" height="1.500" /><rect x="7" y="20" width="6" height="1.500" /></svg>;
const SmallWrench = ({ active }) => <Wrench size={23} strokeWidth={1.500} className={`shrink-0 ${active ? 'text-[#6ba1ea]' : 'text-[#4a71a8]'}`} />;
const Leaf = () => <Svg s={22} vb="0 0 22 22" className="text-[#4f8f5a]"><path d="M19 2c1 7 0 12-4 14-3 1-6 0-8-2-1-5 4-10 12-12zM6 15l-4 5M7 9l5 3 3-6" /></Svg>;
const CamData = () => <Svg s={24} vb="0 0 24 24" className="text-[#4f8f5a]"><path d="M4 14c-3-3-1-7 3-7 1-4 7-5 10-2 4 0 6 3 5 6-1 2-3 2-4 2H8" /><rect x="6" y="15" width="10" height="7" rx="1" /><path d="M16 18l5-2v6l-5-2zM3 16v5" /></Svg>;

const ROWS = [
  { name: 'Camera', icon: <CamObj />, ex: [<CamData key="c" />], w: 'w-[96px]', tri: 1 },
  { name: 'Cube', icon: <MeshObj className="text-[#d68c50]" />, sel: 1, ex: [<SmallWrench key="w" active />, <span key="m" className="ml-[8px]"><MeshData className="text-[#5cc878]" /></span>], w: 'w-[75px]', tri: 1 },
  { name: 'Cube.001', icon: <MeshObj />, ex: [<SmallWrench key="w" />, <span key="m" className="ml-[8px]"><MeshData /></span>], w: 'w-[109px]', tri: 1 },
  { name: 'Empty', icon: <EmptyObj />, ex: [], w: 'w-[100px]' },
  { name: 'Icosphere.002', icon: <MeshObj />, ex: [<MeshData key="m" />], w: 'w-[146px]', tri: 1 },
  { name: 'Light', icon: <Bulb />, ex: [<Leaf key="l" />], w: 'w-[73px]', tri: 1 },
  { name: 'Plane.002', icon: <MeshObj />, ex: [<SmallWrench key="w" />, <span key="m" className="ml-[8px]"><MeshData /></span>], w: 'w-[112px]', tri: 1 },
  { name: 'Plane.003', icon: <MeshObj />, ex: [<SmallWrench key="w" />, <span key="m" className="ml-[8px]"><MeshData /></span>], w: 'w-[112px]', tri: 1 },
];

const Outliner = () => (
  <div className="h-[328px] rounded-[7px] overflow-hidden flex flex-col shrink-0 bg-[#333]">
    <div className="h-[38px] bg-[#303030] flex items-center shrink-0">
      <DarkBtn w="w-[48px]" className="ml-[10px]">
        <svg width="24" height="22" viewBox="0 0 24 22" fill="#eee"><rect x="2" y="1" width="8" height="4" /><rect x="11" y="9" width="11" height="4" /><rect x="11" y="16" width="11" height="4" /><path d="M4 5v13h6M4 11h6" stroke="#eee" fill="none" /></svg><Chev />
      </DarkBtn>
      <DarkBtn w="w-[47px]" className="ml-[7px]">
        <svg width="22" height="22" viewBox="0 0 22 22" fill="none" stroke="#eee" strokeWidth="1.200"><rect x="7" y="2" width="13" height="13" fill="#eee" /><path d="M9 13l3-5 2 3 1-1 3 3z" fill="#333" stroke="none" /><path d="M5 5v12h12M2 8v12h12" /></svg><Chev />
      </DarkBtn>
      <div className="ml-[61px] w-[173px] h-[29px] bg-[#1d1d1d] rounded-[3px] flex items-center pl-[7px]"><Search /></div>
      <DarkBtn w="w-[47px]" className="ml-[111px]"><Svg s={24} vb="0 0 24 24" className="text-[#eee]"><path d="M2 3h20l-8 9v10l-4-2v-8z" /></Svg><Chev /></DarkBtn>
      <div className="ml-[9px] w-[29px] h-[29px] rounded-[5px] bg-[#545454] flex items-center justify-center"><svg width="24" height="24" viewBox="0 0 24 24" fill="none" stroke="#ccc" strokeWidth="1.300"><rect x="2" y="4" width="14" height="4" /><rect x="3" y="10" width="13" height="12" /><path d="M7 14h5" /><circle cx="18" cy="6" r="5" fill="#ddd" stroke="none" /><path d="M18 3v6M15 6h6" stroke="#444" /></svg></div>
    </div>
    <div className="relative flex-1 overflow-hidden text-[#d6d6d6]">
      <div className="h-[30px] bg-[#333] flex items-center pl-[33px]"><Box /><span className="ml-[10px] pt-[5px]">Scene Collection</span></div>
      <div className="h-[30px] bg-[#393939] flex items-center">
        <span className="ml-[39px]"><Tri down className="text-[#ccc]" /></span>
        <div className="ml-[10px] w-[28px] h-[28px] rounded-[6px] bg-[#555] border border-[#666] flex items-center justify-center"><Box s={20} /></div>
        <span className="ml-[8px] pt-[5px]">Invisible</span>
        <div className="ml-auto mr-[16px] flex items-center pt-[2px]">
          <span className="w-[16px] h-[16px] bg-[#e8e8e8] rounded-[2px] flex items-center justify-center mr-[13px]"><Svg s={12} vb="0 0 12 12" sw={2} className="text-[#222]"><path d="M2 6l3 3 5-7" /></Svg></span>
          <Eye /><span className="ml-[8px]"><Monitor on /></span><span className="ml-[10px]"><CamOn className="text-white" /></span>
          <span className="ml-[11px]"><Svg s={20} className="text-[#777]"><circle cx="10" cy="10" r="6.500" /><path d="M10 5.500a4 4 0 0 0-4 4" /></Svg></span>
        </div>
      </div>
      {ROWS.map((r, i) => (
        <div key={r.name} className={`h-[30px] flex items-center relative ${r.sel ? 'bg-[#3b5689]' : i % 2 ? 'bg-[#393939]' : 'bg-[#333]'}`}>
          <span className="ml-[69px] w-[10px] flex">{r.tri ? <Tri className={r.sel ? 'text-[#ddd]' : 'text-[#777]'} /> : null}</span>
          <span className={`ml-[10px] w-[28px] h-[28px] flex items-center justify-center rounded-[6px] ${r.sel ? 'bg-[#5a74a5] border border-[#6d86b3]' : ''}`}>{r.icon}</span>
          <span className={`ml-[8px] ${r.w} shrink-0 pt-[5px] ${r.sel ? 'text-[#ffa32e]' : 'text-[#7c7c7c]'}`}>{r.name}</span>
          <span className="flex items-center -mt-[2px]">{r.ex}</span>
          <div className="absolute right-[16px] top-[5px] flex items-center">
            <Eye />
            <span className="ml-[8px]">{r.sel ? <Monitor on /> : <Monitor />}</span>
            <span className="ml-[10px]">{r.sel ? <CamOn /> : <CamOff />}</span>
            <span className="ml-[11px] w-[20px]" />
          </div>
        </div>
      ))}
      <span className="absolute left-[43px] top-[60px] bottom-0 w-px bg-[#6a6a6a]" />
    </div>
  </div>
);

/* --------- properties --------- */
const PTab = ({ active, children, h = 'h-[41px]' }) => <div className={`${h} w-[41px] ${active ? 'bg-[#424242]' : 'bg-[#303030]'} rounded-l-[4px] flex items-center justify-center mb-px`}>{children}</div>;
const Btn30 = ({ c = 'bg-[#545454]', w = 'w-[29px]', cls = '', children }) => <div className={`${w} h-full ${c} ${cls} flex items-center justify-center shrink-0 ml-px`}>{children}</div>;
const Dots = () => <svg width="16" height="8" viewBox="0 0 16 8" fill="#ccc" className="shrink-0"><path d="M0 0h2v2H0zM4 0h2v2H4zM8 0h2v2H8zM12 0h2v2h-2zM0 4h2v2H0zM4 4h2v2H4zM8 4h2v2H8zM12 4h2v2h-2z" /></svg>;
const EditIc = () => <svg width="24" height="22" viewBox="0 0 22 20" fill="none" stroke="currentColor" strokeWidth="1.200"><path d="M4 5h14M4 16h14" /><rect x="2" y="3" width="4" height="4" fill="#555" /><rect x="2" y="14" width="4" height="4" fill="#555" /><rect x="16" y="14" width="4" height="4" fill="#555" /><path d="M4 7v7M18 7v7" /><rect x="15" y="2" width="6" height="6" fill="currentColor" stroke="none" /></svg>;
const Dot = () => <span className="ml-[12px] w-[5px] h-[5px] rounded-full bg-[#ddd] shrink-0" />;
const PropRow = ({ label, mt, children, dot = true }) => (
  <div className={`flex items-center h-[30px] ${mt}`}>
    <span className="w-[184px] text-right text-[#d2d2d2] [text-shadow:0_1px_1px_rgba(0,0,0,.5)] shrink-0 translate-y-px">{label}</span>
    <div className="ml-[13px] w-[261px] h-[30px] shrink-0">{children}</div>
    {dot && <Dot />}
  </div>
);
const Drop = ({ children }) => <div className="h-full rounded-[6px] bg-[#2b2b2b] border border-[#262626] flex items-center pl-[11px] pr-[4px] justify-between text-[#e3e3e3]"><T>{children}</T><Chev /></div>;

const ModHeader = ({ icon, name, border, hi, pl = 'pl-[12px]', cls = '' }) => (
  <div className={`h-[37px] flex items-center ${pl} shrink-0 ${border} ${cls}`}>
    <Tri down className="text-[#999]" />
    <span className="ml-[12px] w-[20px] flex justify-center">{icon}</span>
    <div className="ml-[17px] w-[203px] h-[29px] bg-[#1d1d1d] rounded-l-[5px] flex items-center pl-[12px] text-[#e6e6e6]"><T>{name}</T></div>
    <div className="h-[29px] flex">
      <Btn30 c="bg-[#4c4c4c]"><MeshData s={24} className={hi ? 'text-[#e6e6e6]' : 'text-[#aaa]'} /></Btn30>
      <Btn30 c={hi ? 'bg-[#5680c2]' : 'bg-[#4c4c4c]'}><span className={hi ? 'text-[#dfe7f5]' : 'text-[#aaa]'}><EditIc /></span></Btn30>
      <Btn30 c="bg-[#5680c2]"><Monitor on /></Btn30>
      <Btn30 c="bg-[#5680c2]"><CamOn className="text-white" /></Btn30>
      <div className="ml-px w-[28px] bg-[#2b2b2b] rounded-r-[5px] flex items-center justify-center"><Chev /></div>
    </div>
    <span className="ml-[10px]"><Close /></span>
    <span className="ml-[27px]"><Dots /></span>
  </div>
);

const Properties = () => (
  <div className="h-[826px] rounded-[7px] overflow-hidden flex flex-col shrink-0 bg-[#424242]">
    <div className="h-[36px] bg-[#303030] flex items-center shrink-0">
      <DarkBtn w="w-[45px]" className="ml-[13px]">
        <svg width="24" height="24" viewBox="0 0 24 24"><rect x="2" y="3" width="20" height="8" rx="4" fill="#eee" /><rect x="2" y="13" width="20" height="8" rx="4" fill="#eee" /><rect x="4" y="5" width="10" height="4" rx="2" fill="#333" /><rect x="12" y="15" width="8" height="4" rx="2" fill="#eee" /></svg><Chev />
      </DarkBtn>
      <div className="ml-[133px] w-[174px] h-[29px] bg-[#1d1d1d] rounded-[3px] flex items-center pl-[7px]"><Search /></div>
      <DarkBtn w="w-[29px]" className="ml-[148px]"><Chev /></DarkBtn>
    </div>
    <div className="flex flex-1 min-h-0">
      <div className="w-[41px] bg-[#222] pt-[12px] shrink-0 flex flex-col">
        <PTab><svg width="24" height="24" viewBox="0 0 24 24" fill="#ddd"><path d="M4 2h2v10H4zM2 13h6v7a3 3 0 0 1-6 0z" /><path d="M16 3v5h2V3c3 1 4 5 1 7v10a2 2 0 0 1-4 0V10c-3-2-2-6 1-7z" /></svg></PTab>
        <div className="h-[24px]" />
        <PTab h="h-[41px]"><svg width="22" height="22" viewBox="0 0 22 22" fill="none"><path d="M2 6V2h4M16 2h4v4M20 16v4h-4M6 20H2v-4" stroke="#d08e58" strokeWidth="1.400" /><rect x="5.500" y="5.500" width="11" height="11" fill="#d08e58" /></svg></PTab>
        <PTab active><Wrench size={25} className="text-[#6ba8f5]" fill="#6ba8f5" /></PTab>
        <PTab><svg width="22" height="22" viewBox="0 0 22 22" fill="#6ba8f5" stroke="#6ba8f5" strokeWidth="1.100"><circle cx="4" cy="4" r="3" /><circle cx="18" cy="4" r="2" /><circle cx="4" cy="18" r="2" /><circle cx="18" cy="18" r="2" /><path d="M4 4h14M4 4v14M4 4l14 14" fill="none" /></svg></PTab>
        <PTab><svg width="24" height="24" viewBox="0 0 24 24" fill="none" stroke="#6ba8f5" strokeWidth="1.500"><circle cx="11" cy="13" r="3.500" fill="#6ba8f5" /><path d="M20 16a9.500 9.500 0 1 1-7-12" /><circle cx="19" cy="5" r="2.500" fill="#6ba8f5" stroke="none" /></svg></PTab>
        <PTab><svg width="24" height="24" viewBox="0 0 24 24" fill="none" stroke="#6ba8f5" strokeWidth="1.700"><path d="M3 14 16 3c5-2 7 2 5 6L10 21c-3 2-9-2-7-7z" /><circle cx="10" cy="14" r="3.500" /></svg></PTab>
        <PTab><MeshData className="text-[#5cc878]" /></PTab>
        <PTab><svg width="22" height="22" viewBox="0 0 22 22"><circle cx="11" cy="11" r="10" fill="#e0504f" /><path d="M11 11h10a10 10 0 0 1-10 10z" fill="#222" /><path d="M11 1a10 10 0 0 0-10 10h10z" fill="#f07d7c" /></svg></PTab>
        <div className="h-[10px]" />
        <PTab h="h-[42px]"><Checker red /></PTab>
      </div>
      <div className="flex-1 flex flex-col text-[#e3e3e3]">
        <div className="mt-[12px] h-[30px] flex items-center pl-[16px] shrink-0">
          <ObjIcon /><T cls="ml-[13px] text-[#d6d6d6]">Plane</T>
          <span className="ml-[21px] w-[26px]"><Tri className="text-[#555] scale-[.7]" /></span>
          <GeoIcon /><T cls="ml-[13px] text-[#d6d6d6]">GeometryNodes</T>
          <span className="ml-auto mr-[14px]"><Pin c="#ddd" /></span>
        </div>
        <div className="ml-[13px] mt-[25px] w-[488px] h-[28px] rounded-[5px] bg-[#2b2b2b] flex items-center pl-[11px] pr-[4px] justify-between shrink-0"><T>Add Modifier</T><Chev /></div>
        <div className="ml-[7px] mt-[19px] w-[500px] h-[363px] rounded-[6px] bg-[#383838] shrink-0 flex flex-col">
          <ModHeader border="border-b border-[#2e2e2e]" name="Displace" icon={<svg width="22" height="22" viewBox="0 0 22 22" fill="none" stroke="#bbb" strokeWidth="1.300"><path d="M4 12V2h15L4 13h14L3 20l14-4" /></svg>} />
          <div className="ml-[11px] mt-[13px] h-[27px] flex shrink-0">
            <div className="w-[48px] rounded-l-[6px] bg-[#2b2b2b] border border-[#262626] flex items-center justify-center gap-[2px]"><Checker /><Chev /></div>
            <div className="w-[308px] bg-[#1d1d1d] flex items-center pl-[11px]">Texture</div>
            <Btn30><Shield /></Btn30>
            <Btn30><Copy className="text-[#ccc]" /></Btn30>
            <Btn30><Close /></Btn30>
            <Btn30 cls="rounded-r-[6px]"><svg width="20" height="20" viewBox="0 0 20 20" fill="none"><rect x="2" y="2" width="16" height="7" rx="3.500" fill="#888" /><rect x="3" y="3" width="8" height="5" rx="2.500" fill="#444" /><rect x="2" y="11" width="16" height="7" rx="3.500" fill="#888" /><rect x="9" y="12" width="8" height="5" rx="2.500" fill="#777" /></svg></Btn30>
          </div>
          <PropRow label="Coordinates" mt="mt-[8px]"><Drop>Object</Drop></PropRow>
          <PropRow label="Object" mt="mt-[3px]" dot={false}>
            <div className="h-full rounded-[4px] bg-[#1d1d1d] border border-[#2a2a2a] flex items-center pl-[6px]"><ObjIcon /><T cls="ml-[10px]">Empty</T><span className="ml-auto mr-[10px]"><Close /></span></div>
          </PropRow>
          <PropRow label="Direction" mt="mt-[23px]"><Drop>RGB to XYZ</Drop></PropRow>
          <PropRow label="Space" mt="mt-[3px]"><Drop>Local</Drop></PropRow>
          <PropRow label="Strength" mt="mt-[23px]"><div className="h-full rounded-[8px] bg-[#545454] flex items-center justify-center"><T>5.000</T></div></PropRow>
          <PropRow label="Midlevel" mt="mt-[3px]">
            <div className="relative h-full rounded-[8px] bg-[#545454] overflow-hidden flex items-center justify-center">
              <span className="absolute left-0 top-0 bottom-0 w-[129px] bg-[#5680c2]" />
              <T cls="relative">0.500</T>
            </div>
          </PropRow>
          <PropRow label="Vertex Group" mt="mt-[3px]" dot={false}>
            <div className="h-full flex">
              <div className="w-[230px] bg-[#1d1d1d] rounded-l-[4px] flex items-center pl-[5px]"><svg width="22" height="22" viewBox="0 0 22 22" fill="#eee"><rect x="8" y="1" width="5" height="4" fill="none" stroke="#bbb" /><rect x="1" y="7" width="5" height="5" /><rect x="8" y="7" width="6" height="5" /><rect x="16" y="7" width="5" height="4" fill="none" stroke="#bbb" /><rect x="1" y="14" width="5" height="5" /><rect x="8" y="14" width="6" height="6" /><rect x="16" y="14" width="5" height="4" fill="none" stroke="#bbb" /></svg></div>
              <div className="flex-1 bg-[#4c4c4c] rounded-r-[6px] flex items-center justify-center text-[#999]"><Svg s={24} vb="0 0 24 24" sw={1.200}><path d="M2 12h20M6 8l-4 4 4 4M18 8l4 4-4 4" /></Svg></div>
            </div>
          </PropRow>
        </div>
        <div className="ml-[7px] mt-[8px] w-[500px] h-[90px] rounded-[6px] bg-[#383838] border border-[#5680c2] shrink-0 flex flex-col">
          <ModHeader hi pl="pl-[11px]" cls="-mt-px" border="border-b border-[#2e2e2e]" name="GeometryNodes" icon={<GeoIcon />} />
          <div className="ml-[10px] mt-[12px] h-[27px] flex">
            <div className="w-[48px] rounded-l-[6px] bg-[#2b2b2b] border border-[#262626] flex items-center justify-center gap-[2px]"><GeoIcon /><Chev /></div>
            <div className="w-[282px] bg-[#1d1d1d] flex items-center pl-[11px]"><T>Geometry Nodes</T></div>
            <Btn30 w="w-[55px]"><T>2</T></Btn30>
            <Btn30><Shield /></Btn30>
            <Btn30><Copy /></Btn30>
            <Btn30 cls="rounded-r-[6px]"><Close /></Btn30>
          </div>
        </div>
      </div>
    </div>
  </div>
);

const Mouse = ({ side }) => (
  <svg width="18" height="24" viewBox="0 0 18 24" fill="none" stroke="#bbb" strokeWidth="1.100" className="shrink-0">
    <rect x="2" y="1" width="14" height="22" rx="5" />
    {side === 'l' && <path d="M9 1v9H2V6a5 5 0 0 1 5-5z" fill="#ccc" />}
    {side === 'r' && <path d="M9 1v9h7V6a5 5 0 0 0-5-5z" fill="#ccc" />}
    {side === 'm' && <rect x="7.500" y="4" width="3" height="7" rx="1.500" fill="#ccc" />}
  </svg>
);

export default function App() {
  return (
    <div className="w-[1404px] h-[1232px] bg-[#1a1a1a] flex flex-col overflow-hidden text-[16px] leading-none [font-family:'DejaVu_Sans',sans-serif]">
      <div className="h-[38px] bg-[#232323] flex shrink-0 overflow-hidden">
        <div className="pl-[5px] h-[34px] flex items-center gap-[22px] text-[#e6e6e6] shrink-0 w-[340.500px] pt-[6px]">
          <span>File</span><span>Edit</span><span>Render</span><span>Window</span><span>Help</span>
        </div>
        <div className="pt-[6px] flex gap-[2px] text-[#a0a0a0] shrink-0 w-[456.500px] overflow-hidden">
          {['Layout', 'Modeling', 'Sculpting', 'UV Editing', 'Texture Paint'].map((t) => <div key={t} className="h-[32px] rounded-t-[6px] bg-[#303030] px-[13.500px] flex items-center whitespace-nowrap shrink-0">{t}</div>)}
        </div>
        <div className="ml-[12px] mt-[5px] h-[28px] flex shrink-0 text-[#e6e6e6]">
          <div className="w-[48px] rounded-l-[6px] bg-[#2b2b2b] border border-[#333] flex items-center justify-center gap-[1px]">
            <svg width="24" height="24" viewBox="0 0 24 24" fill="#e8e8e8"><path d="M7 4c3 4 5 7 5 10a5 5 0 0 1-10 0c0-3 2-6 5-10z" /><circle cx="18" cy="5" r="3" /><circle cx="16" cy="16" r="6" fill="#2b2b2b" stroke="#e8e8e8" strokeWidth="1.300" /><circle cx="16" cy="16" r="2" /></svg><Chev />
          </div>
          <div className="w-[180px] bg-[#1d1d1d] flex items-center pl-[11px]"><T>Scene</T></div>
          <div className="w-[30px] bg-[#545454] flex items-center justify-center"><Copy /></div>
          <div className="w-[29px] bg-[#3f3f3f] rounded-r-[6px] flex items-center justify-center ml-px"><Close className="text-[#8a8a8a]" /></div>
          <div className="ml-[8px] w-[47px] rounded-l-[6px] bg-[#2b2b2b] border border-[#333] flex items-center justify-center gap-[1px]">
            <svg width="22" height="22" viewBox="0 0 22 22" fill="none" stroke="#eee" strokeWidth="1.200"><rect x="7" y="2" width="13" height="13" fill="#eee" /><path d="M9 13l3-5 2 3 1-1 3 3z" fill="#333" stroke="none" /><path d="M5 5v12h12M2 8v12h12" /></svg><Chev />
          </div>
          <div className="w-[180px] bg-[#1d1d1d] flex items-center pl-[11px]"><T>View Layer</T></div>
          <div className="w-[30px] bg-[#545454] flex items-center justify-center"><Copy /></div>
          <div className="w-[29px] bg-[#3f3f3f] rounded-r-[6px] flex items-center justify-center ml-px"><Close className="text-[#8a8a8a]" /></div>
        </div>
      </div>
      <div className="h-[1164px] shrink-0 flex pt-[2px] pb-[2px] pl-[2px] gap-[4px]">
        <div className="w-[842px] flex flex-col gap-[4px] shrink-0"><Viewport /><NodeEditor /></div>
        <div className="w-[554px] flex flex-col gap-[6px] shrink-0"><Outliner /><Properties /></div>
      </div>
      <div className="h-[30px] bg-[#2e2e2e] flex items-center shrink-0 text-[#a8a8a8] overflow-hidden whitespace-nowrap">
        <span className="ml-[18px]"><Mouse side="l" /></span>
        <span className="ml-[16px] w-[354px] shrink-0">Preview Node</span>
        <Mouse side="m" />
        <span className="ml-[369px]"><Mouse side="r" /></span>
        <span className="ml-[15px] w-[423px] shrink-0">Mix Nodes</span>
        <span className="shrink-0">Invisible | Cube | Ve</span>
      </div>
    </div>
  );
}
